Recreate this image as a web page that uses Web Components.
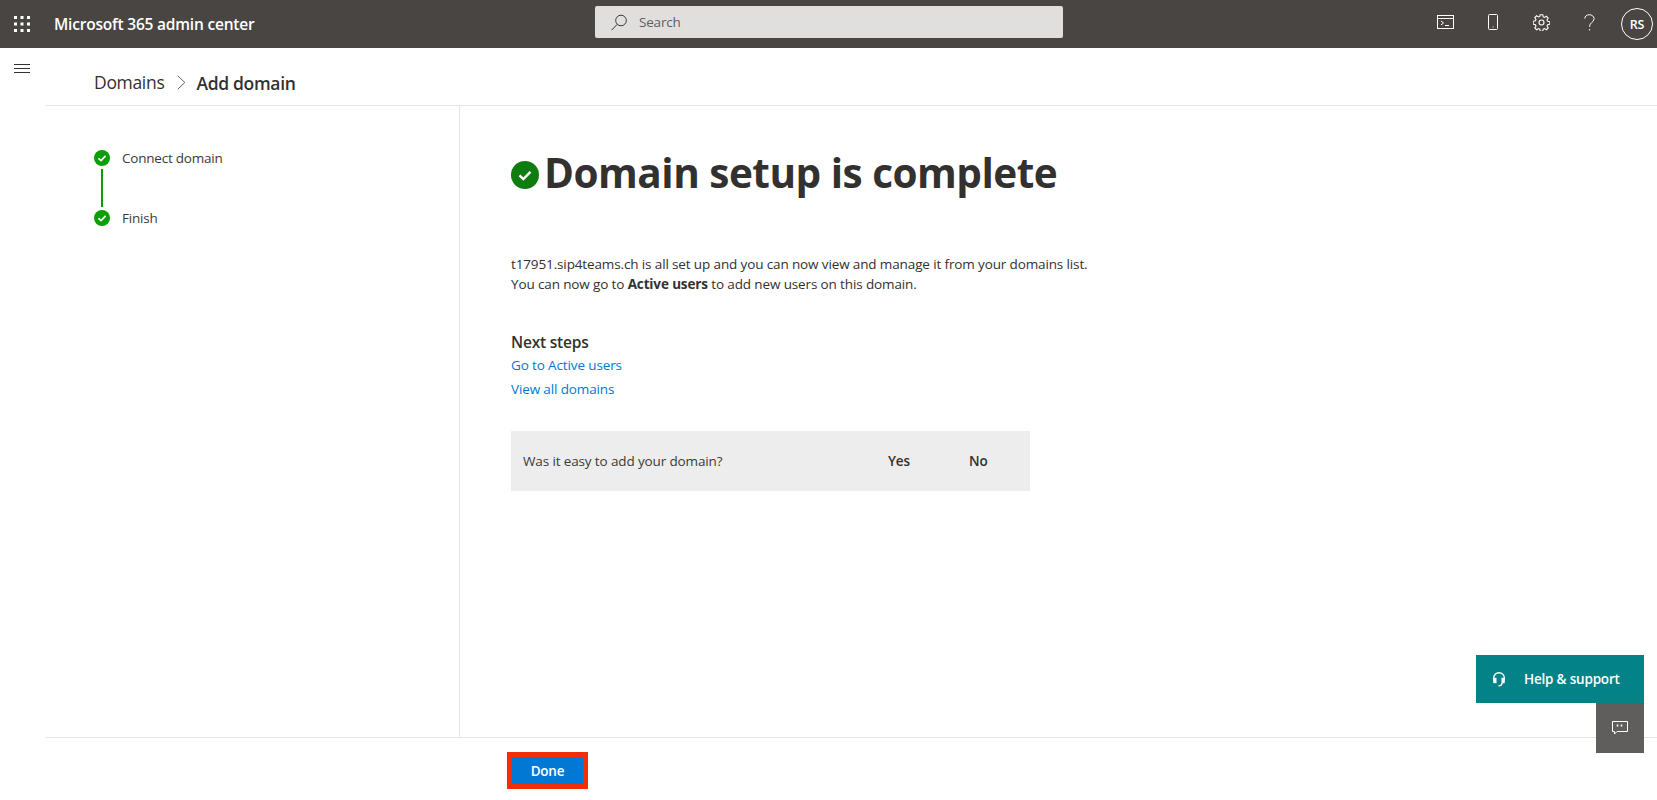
<!DOCTYPE html>
<html lang="en"><head><meta charset="utf-8"><title>Add domain</title>
<style>
html,body{margin:0;padding:0;height:100%;overflow:hidden}
body{font-family:"Open Sans","Noto Sans",sans-serif;color:#323130;background:#fff}
</style></head>
<body>
<m365-app></m365-app>
<template id="t-app"><style>
:host{display:flex;flex-direction:column;height:800px;width:1657px;position:relative;overflow:hidden}
.main{flex:1;display:flex;min-height:0}
.nav{width:46px;flex:none;box-sizing:border-box;padding:16px 0 0 14px}
.nav svg{display:block}
.col{flex:1;display:flex;flex-direction:column;min-width:0}
.mid{flex:1;display:flex;min-height:0}
</style>
<m365-topbar></m365-topbar>
<div class="main">
<div class="nav"><svg width="16" height="10" viewBox="0 0 16 10"><path d="M0 .5h16M0 4.5h16M0 8.5h16" stroke="#323130" stroke-width="1" fill="none"/></svg></div>
<div class="col">
<m365-breadcrumb parent="Domains" current="Add domain"></m365-breadcrumb>
<div class="mid"><m365-stepper></m365-stepper><m365-complete></m365-complete></div>
<m365-footer></m365-footer>
</div></div>
<m365-help></m365-help>
</template>

<template id="t-topbar"><style>
:host{display:flex;align-items:center;height:48px;flex:none;background:#494543;color:#fff;position:relative}
.waffle{margin-left:14px;width:16px;height:16px;flex:none;display:block}
.title{margin-left:24px;font-size:15.5px;font-weight:600;letter-spacing:-.2px;white-space:nowrap;width:541px;flex:none}
.search{width:468px;height:32px;flex:none;margin-top:-4px;background:#e1dfdd;border-radius:2px;display:flex;align-items:center;box-sizing:border-box;padding-left:16px;color:#605e5c;font-size:13.5px;letter-spacing:-.2px}
.search svg{margin-right:12px;flex:none}
.icons{margin-left:auto;display:flex;align-items:center}
.i{display:flex;align-items:center;justify-content:center;width:48px;height:48px;margin-top:-4px}
.a{width:32px;height:32px;box-sizing:border-box;border:1px solid #fff;border-radius:50%;display:flex;align-items:center;justify-content:center;font-size:12.5px;font-weight:600;margin:0 4px 0 8px;letter-spacing:-.2px}
</style>
<svg class="waffle" viewBox="0 0 16 16" fill="#fff"><rect x="0" y="0" width="3" height="3"/><rect x="6.5" y="0" width="3" height="3"/><rect x="13" y="0" width="3" height="3"/><rect x="0" y="6.5" width="3" height="3"/><rect x="6.5" y="6.5" width="3" height="3"/><rect x="13" y="6.5" width="3" height="3"/><rect x="0" y="13" width="3" height="3"/><rect x="6.5" y="13" width="3" height="3"/><rect x="13" y="13" width="3" height="3"/></svg>
<div class="title">Microsoft 365 admin center</div>
<div class="search"><svg width="16" height="17" viewBox="0 0 16 17" fill="none" stroke="#3b3a39" stroke-width="1"><circle cx="10" cy="6.5" r="5.3"/><path d="M6.2 10.3 .6 16.2"/></svg><span>Search</span></div>
<div class="icons">
<div class="i"><svg width="17" height="14" viewBox="0 0 17 14" fill="none" stroke="#fff"><rect x=".5" y=".5" width="16" height="13"/><path d="M.5 3.5h16M4 6l2.5 2L4 10M8 10.5h4"/></svg></div>
<div class="i"><svg width="10" height="16" viewBox="0 0 10 16" fill="none" stroke="#fff"><rect x=".5" y=".5" width="9" height="15" rx="1"/><path d="M4.5 13h1"/></svg></div>
<div class="i"><svg width="17" height="17" viewBox="0 0 17 17" fill="none" stroke="#fff" stroke-width="1.1"><circle cx="8.500" cy="8.500" r="2.500"/><path d="M7.200.7h2.600l.4 2.200 1.300.6 1.900-1.200 1.800 1.800-1.200 1.900.6 1.300 2.200.4v2.600l-2.200.4-.6 1.300 1.200 1.900-1.800 1.800-1.900-1.200-1.300.6-.4 2.200H7.200l-.4-2.200-1.300-.6-1.900 1.200-1.800-1.800 1.200-1.900-.6-1.300-2.200-.4V7.200l2.200-.4.6-1.300-1.200-1.900 1.800-1.800 1.900 1.200 1.300-.6z"/></svg></div>
<div class="i"><svg width="11" height="17" viewBox="0 0 11 17" fill="none" stroke="#fff"><path d="M.8 4.6C.8 2.300 2.800.7 5.300.7s4.800 1.600 4.800 4c0 3.700-4.600 3.600-4.600 8.100"/><circle cx="5.500" cy="15.700" r=".7" fill="#fff" stroke="none"/></svg></div>
<div class="a">RS</div>
</div>
</template>

<template id="t-bc"><style>
:host{display:block;height:58px;flex:none;box-sizing:border-box;border-bottom:1px solid #e6e4e2;padding:22px 0 0 48px}
.r{display:flex;align-items:center;height:25px;font-size:17.5px;letter-spacing:-.32px;white-space:nowrap}
.p{color:#323130;margin-top:-1px}
svg{margin:0 10px 0 13px}
.c{font-weight:600;color:#323130}
</style><div class="r"><span class="p" id="p"></span><svg width="9" height="15" viewBox="0 0 9 15" fill="none" stroke="#605e5c"><path d="M.8.8 7.800 7.500.8 14.200"/></svg><span class="c" id="c"></span></div></template>

<template id="t-stepper"><style>
:host{display:block;width:414px;flex:none;box-sizing:border-box;border-right:1px solid #e6e4e2;padding:41px 0 0 48px}
</style>
<m365-step>Connect domain</m365-step>
<div style="width:2px;height:38px;background:#0a9e07;margin:0 0 0 7px"></div>
<m365-step>Finish</m365-step>
</template>
<template id="t-step"><style>
:host{display:flex;align-items:center;height:22px;font-size:13.500px;letter-spacing:-.22px;color:#3b3a39;white-space:nowrap}
svg{margin-right:12px;flex:none}
</style><svg width="16" height="16" viewBox="0 0 16 16"><circle cx="8" cy="8" r="8" fill="#0a9e07"/><path d="M4.500 8.300 7 10.600 11.600 5.800" fill="none" stroke="#fff" stroke-width="1.700"/></svg><slot></slot></template>

<template id="t-complete"><style>
:host{display:block;flex:1;box-sizing:border-box;padding:45px 0 0 51px;font-size:13.500px;letter-spacing:-.13px;line-height:20px;color:#323130}
h1{display:flex;align-items:center;margin:0;height:48px;font-size:40.500px;font-weight:700;letter-spacing:-.5px;line-height:48px;white-space:nowrap}
h1 svg{margin-right:5px;flex:none}
h1 span{padding-bottom:4px}
p{margin:55px 0 0;white-space:nowrap}
b{font-weight:700}
h2{margin:37px 0 0;font-size:15.500px;font-weight:600;line-height:22px;letter-spacing:-.2px}
a{display:block;color:#0078d4;text-decoration:none;line-height:20px}
a.first{margin-top:2px}a.next{margin-top:4px}
</style>
<h1><svg width="28" height="28" viewBox="0 0 28 28"><circle cx="14" cy="14" r="14" fill="#107c10"/><path d="M8.500 14.300 12.300 18 19.500 10.800" fill="none" stroke="#fff" stroke-width="2.400"/></svg><span>Domain setup is complete</span></h1>
<p>t17951.sip4teams.ch is all set up and you can now view and manage it from your domains list.<br>You can now go to <b>Active users</b> to add new users on this domain.</p>
<h2>Next steps</h2>
<a class="first" href="#">Go to Active users</a>
<a class="next" href="#">View all domains</a>
<m365-feedback></m365-feedback>
</template>

<template id="t-feedback"><style>
:host{display:flex;align-items:center;width:519px;height:60px;margin-top:32px;background:#ededed;box-sizing:border-box;padding-left:12px;white-space:nowrap;color:#3b3a39}
.q{width:365px}
.b{font-weight:600;color:#323130}
.y{width:81px}
</style><span class="q">Was it easy to add your domain?</span><span class="b y">Yes</span><span class="b">No</span></template>

<template id="t-footer"><style>
:host{display:block;height:63px;flex:none;box-sizing:border-box;border-top:1px solid #e6e4e2;padding:14px 0 0 461px}
button{display:block;width:81px;height:37px;box-sizing:border-box;border:5px solid #f52c0a;background:#0078d4;color:#fff;font:600 13.500px "Open Sans","Noto Sans",sans-serif;letter-spacing:-.2px;padding:1px 0 0}
</style><button>Done</button></template>

<template id="t-help"><style>
:host{position:absolute;right:13px;top:655px;display:flex;flex-direction:column;align-items:flex-end}
.h{width:168px;height:48px;background:#038387;color:#fff;display:flex;align-items:center;box-sizing:border-box;padding-left:17px;font-size:13.500px;font-weight:600;letter-spacing:-.2px;white-space:nowrap}
.h svg{margin-right:19px;flex:none}
.c{width:48px;height:50px;background:#605e5c;display:flex;align-items:center;justify-content:center}
</style>
<div class="h"><svg width="12" height="15" viewBox="0 0 12 15" fill="none" stroke="#fff" stroke-width="1.400"><path d="M2.200 10.500C.9 9.500.7 7.800.7 6 .7 3 3 .8 6 .8s5.300 2.200 5.300 5.200c0 1.800-.2 3.500-1.500 4.500"/><rect x="1" y="6.500" width="1.800" height="4" fill="#fff"/><rect x="9.200" y="6.500" width="1.800" height="4" fill="#fff"/><path d="M9 11c0 2-1.500 2.800-3.500 2.800"/></svg><span>Help &amp; support</span></div>
<div class="c"><svg width="16" height="14" viewBox="0 0 16 14" fill="none" stroke="#fff"><path d="M.5.500h15v10H5L2.500 13v-2.500H.5z"/><path d="M5.500 3.500v2M9.500 3.500v2" stroke-width="1.500"/></svg></div>
</template>

<script>
function def(name,tpl,init){customElements.define(name,class extends HTMLElement{constructor(){super();const r=this.attachShadow({mode:'open'});r.appendChild(document.getElementById(tpl).content.cloneNode(true));if(init)init(this,r);}});}
def('m365-step','t-step');
def('m365-feedback','t-feedback');
def('m365-complete','t-complete');
def('m365-stepper','t-stepper');
def('m365-footer','t-footer');
def('m365-help','t-help');
def('m365-topbar','t-topbar');
customElements.define('m365-breadcrumb',class extends HTMLElement{connectedCallback(){if(this.shadowRoot)return;const r=this.attachShadow({mode:'open'});r.appendChild(document.getElementById('t-bc').content.cloneNode(true));r.getElementById('p').textContent=this.getAttribute('parent');r.getElementById('c').textContent=this.getAttribute('current');}});
def('m365-app','t-app');
</script>
</body></html>
